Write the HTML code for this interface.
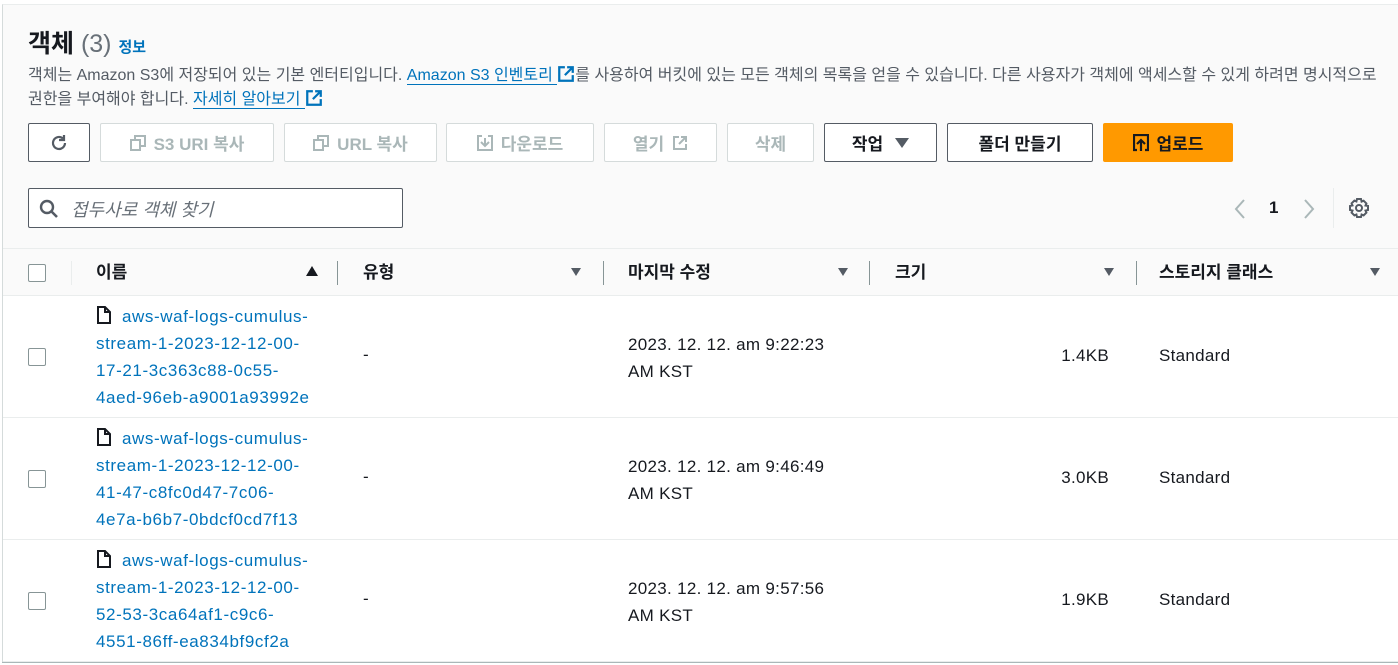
<!DOCTYPE html>
<html><head><meta charset="utf-8"><style>
*{box-sizing:border-box;margin:0;padding:0}
body{width:1398px;height:665px;overflow:hidden;background:#fff;font-family:"Liberation Sans","Noto Sans CJK KR",sans-serif;color:#16191f;position:relative}
.panel{position:absolute;left:2px;top:4px;width:1400px;height:659px;background:#fafafa;border-left:1px solid #d5dbdb;border-top:1px solid #eaeded;border-bottom:1px solid #aab7b8}
.abs{position:absolute}
.btn{position:absolute;top:123px;height:39px;border:1px solid #d5dbdb;border-radius:2px;background:#fff;color:#aab7b8;font-size:17px;font-weight:bold;display:flex;align-items:center;justify-content:center;gap:8px}
.btn.on{border-color:#545b64;color:#16191f}
a{color:#0073bb;text-decoration:none}
.desc{font-size:16px;color:#545b64;line-height:24px;white-space:nowrap}
.desc a{border-bottom:1px solid #0073bb}
.hdr{position:absolute;top:248px;left:3px;width:1395px;height:48px;border-top:1px solid #eaeded;border-bottom:1px solid #eaeded;background:#fafafa;font-size:17px;font-weight:bold;color:#16191f}
.row{position:absolute;left:3px;width:1395px;height:122px;background:#fff;border-bottom:1px solid #eaeded;font-size:17px;letter-spacing:.3px}
.cb{position:absolute;left:25px;width:18px;height:18px;border:1px solid #879596;border-radius:2px;background:#fff}
.sep{position:absolute;top:12px;width:1px;height:24px;background:#879596}
.tri{position:absolute;top:19px;width:0;height:0;border-left:5px solid transparent;border-right:5px solid transparent;border-top:8px solid #545b64}
.name{position:absolute;left:93px;top:7px;line-height:27px;color:#0073bb;letter-spacing:.6px}
</style></head><body>
<div class="panel"></div>
<div class="abs" style="left:28px;top:24px;font-size:25px;font-weight:bold">객체 <span style="font-weight:normal;color:#687078">(3)</span> <a style="font-size:15px;font-weight:bold">정보</a></div>
<div class="abs desc" style="left:28px;top:64px">객체는 Amazon S3에 저장되어 있는 기본 엔터티입니다. <a>Amazon S3 인벤토리 </a><svg width="18" height="18" viewBox="0 0 16 16" style="vertical-align:-3px"><path d="M7 2H2v12h12V9M9 2h5v5M14 2L7 9" fill="none" stroke="#0073bb" stroke-width="2"/></svg>를 사용하여 버킷에 있는 모든 객체의 목록을 얻을 수 있습니다. 다른 사용자가 객체에 액세스할 수 있게 하려면 명시적으로<br>권한을 부여해야 합니다. <a>자세히 알아보기 </a><svg width="18" height="18" viewBox="0 0 16 16" style="vertical-align:-3px"><path d="M7 2H2v12h12V9M9 2h5v5M14 2L7 9" fill="none" stroke="#0073bb" stroke-width="2"/></svg></div>

<div class="btn on" style="left:28px;width:62px"><svg width="20" height="20" viewBox="0 0 20 20"><path d="M16 10a6 6 0 1 1-2-4.5" fill="none" stroke="#545b64" stroke-width="2.2"/><path d="M15 2v5h-5" fill="none" stroke="#545b64" stroke-width="2.2"/></svg></div>
<div class="btn" style="left:100px;width:174px"><svg width="16" height="16" viewBox="0 0 16 16"><rect x="1" y="5" width="9" height="10" fill="none" stroke="#aab7b8" stroke-width="2"/><path d="M5 5V1h10v10h-5" fill="none" stroke="#aab7b8" stroke-width="2"/></svg>S3 URI 복사</div>
<div class="btn" style="left:284px;width:153px"><svg width="16" height="16" viewBox="0 0 16 16"><rect x="1" y="5" width="9" height="10" fill="none" stroke="#aab7b8" stroke-width="2"/><path d="M5 5V1h10v10h-5" fill="none" stroke="#aab7b8" stroke-width="2"/></svg>URL 복사</div>
<div class="btn" style="left:446px;width:148px"><svg width="16" height="16" viewBox="0 0 16 16"><path d="M5 1H1v14h14V1h-4M8 3v8M4 7l4 4 4-4" fill="none" stroke="#aab7b8" stroke-width="2"/></svg>다운로드</div>
<div class="btn" style="left:604px;width:113px">열기 <svg width="16" height="16" viewBox="0 0 16 16"><path d="M7 2H2v12h12V9M9 2h5v5M14 2L7 9" fill="none" stroke="#aab7b8" stroke-width="2"/></svg></div>
<div class="btn" style="left:727px;width:87px">삭제</div>
<div class="btn on" style="left:824px;width:113px">작업 <span style="display:inline-block;border-left:7px solid transparent;border-right:7px solid transparent;border-top:10px solid #545b64;margin-left:4px"></span></div>
<div class="btn on" style="left:947px;width:146px">폴더 만들기</div>
<div class="btn on" style="left:1103px;width:130px;background:#ff9900;border-color:#ff9900"><svg width="16" height="18" viewBox="0 0 16 18"><path d="M4 16H1V1h14v15h-3M8 17V7M4 10l4-4 4 4" fill="none" stroke="#16191f" stroke-width="2.2"/></svg>업로드</div>

<div class="abs" style="left:28px;top:188px;width:375px;height:40px;border:1px solid #545b64;border-radius:2px;background:#fff"><svg class="abs" style="left:10px;top:10px" width="20" height="20" viewBox="0 0 20 20"><circle cx="8" cy="8" r="6" fill="none" stroke="#545b64" stroke-width="2.4"/><path d="M12.5 12.5L18 18" stroke="#545b64" stroke-width="2.6"/></svg><span class="abs" style="left:42px;top:7px;font-size:18px;font-style:italic;color:#687078">접두사로 객체 찾기</span></div>

<svg class="abs" style="left:1233px;top:198px" width="14" height="22" viewBox="0 0 14 22"><path d="M11 2L3 11l8 9" fill="none" stroke="#aab7b8" stroke-width="2"/></svg>
<div class="abs" style="left:1269px;top:198px;font-size:17px;font-weight:bold">1</div>
<svg class="abs" style="left:1302px;top:198px" width="14" height="22" viewBox="0 0 14 22"><path d="M3 2l8 9-8 9" fill="none" stroke="#aab7b8" stroke-width="2"/></svg>
<div class="abs" style="left:1333px;top:188px;width:1px;height:40px;background:#eaeded"></div>
<svg class="abs" style="left:1348px;top:197px" width="22" height="22" viewBox="0 0 22 22"><path d="M9 2h4l.6 2.6 2-.9 2.8 2.8-.9 2L20 9v4l-2.5.6.9 2-2.8 2.8-2-.9L13 20H9l-.6-2.5-2 .9-2.8-2.8.9-2L2 13V9l2.5-.6-.9-2 2.8-2.8 2 .9z" fill="none" stroke="#545b64" stroke-width="2"/><circle cx="11" cy="11" r="3" fill="none" stroke="#545b64" stroke-width="2"/></svg>

<div class="hdr">
<div class="cb" style="top:15px"></div>
<div class="abs" style="left:68px;top:12px;width:1px;height:24px;background:#eaeded"></div>
<span class="abs" style="left:93px;top:9px">이름</span>
<div class="abs" style="left:303px;top:17px;border-left:6px solid transparent;border-right:6px solid transparent;border-bottom:10px solid #16191f"></div>
<div class="sep" style="left:334px"></div>
<span class="abs" style="left:360px;top:9px">유형</span><div class="tri" style="left:568px"></div>
<div class="sep" style="left:600px"></div>
<span class="abs" style="left:625px;top:9px">마지막 수정</span><div class="tri" style="left:835px"></div>
<div class="sep" style="left:866px"></div>
<span class="abs" style="left:892px;top:9px">크기</span><div class="tri" style="left:1101px"></div>
<div class="sep" style="left:1133px"></div>
<span class="abs" style="left:1156px;top:9px">스토리지 클래스</span><div class="tri" style="left:1367px"></div>
</div>

<div class="row" style="top:296px">
<div class="cb" style="top:52px"></div>
<div class="name"><svg width="16" height="18" viewBox="0 0 16 18" style="vertical-align:-2px;margin-right:10px"><path d="M2 1h7l5 5v11H2z M9 1v5h5" fill="none" stroke="#16191f" stroke-width="2"/></svg>aws-waf-logs-cumulus-<br>stream-1-2023-12-12-00-<br>17-21-3c363c88-0c55-<br>4aed-96eb-a9001a93992e</div>
<span class="abs" style="left:360px;top:49px">-</span>
<div class="abs" style="left:625px;top:35px;line-height:27px">2023. 12. 12. am 9:22:23<br>AM KST</div>
<span class="abs" style="right:289px;top:50px">1.4KB</span>
<span class="abs" style="left:1156px;top:50px">Standard</span>
</div>
<div class="row" style="top:418px">
<div class="cb" style="top:52px"></div>
<div class="name"><svg width="16" height="18" viewBox="0 0 16 18" style="vertical-align:-2px;margin-right:10px"><path d="M2 1h7l5 5v11H2z M9 1v5h5" fill="none" stroke="#16191f" stroke-width="2"/></svg>aws-waf-logs-cumulus-<br>stream-1-2023-12-12-00-<br>41-47-c8fc0d47-7c06-<br>4e7a-b6b7-0bdcf0cd7f13</div>
<span class="abs" style="left:360px;top:49px">-</span>
<div class="abs" style="left:625px;top:35px;line-height:27px">2023. 12. 12. am 9:46:49<br>AM KST</div>
<span class="abs" style="right:289px;top:50px">3.0KB</span>
<span class="abs" style="left:1156px;top:50px">Standard</span>
</div>
<div class="row" style="top:540px">
<div class="cb" style="top:52px"></div>
<div class="name"><svg width="16" height="18" viewBox="0 0 16 18" style="vertical-align:-2px;margin-right:10px"><path d="M2 1h7l5 5v11H2z M9 1v5h5" fill="none" stroke="#16191f" stroke-width="2"/></svg>aws-waf-logs-cumulus-<br>stream-1-2023-12-12-00-<br>52-53-3ca64af1-c9c6-<br>4551-86ff-ea834bf9cf2a</div>
<span class="abs" style="left:360px;top:49px">-</span>
<div class="abs" style="left:625px;top:35px;line-height:27px">2023. 12. 12. am 9:57:56<br>AM KST</div>
<span class="abs" style="right:289px;top:50px">1.9KB</span>
<span class="abs" style="left:1156px;top:50px">Standard</span>
</div>
<div class="abs" style="left:2px;top:662px;width:1396px;height:1px;background:#aab7b8"></div>
</body></html>
